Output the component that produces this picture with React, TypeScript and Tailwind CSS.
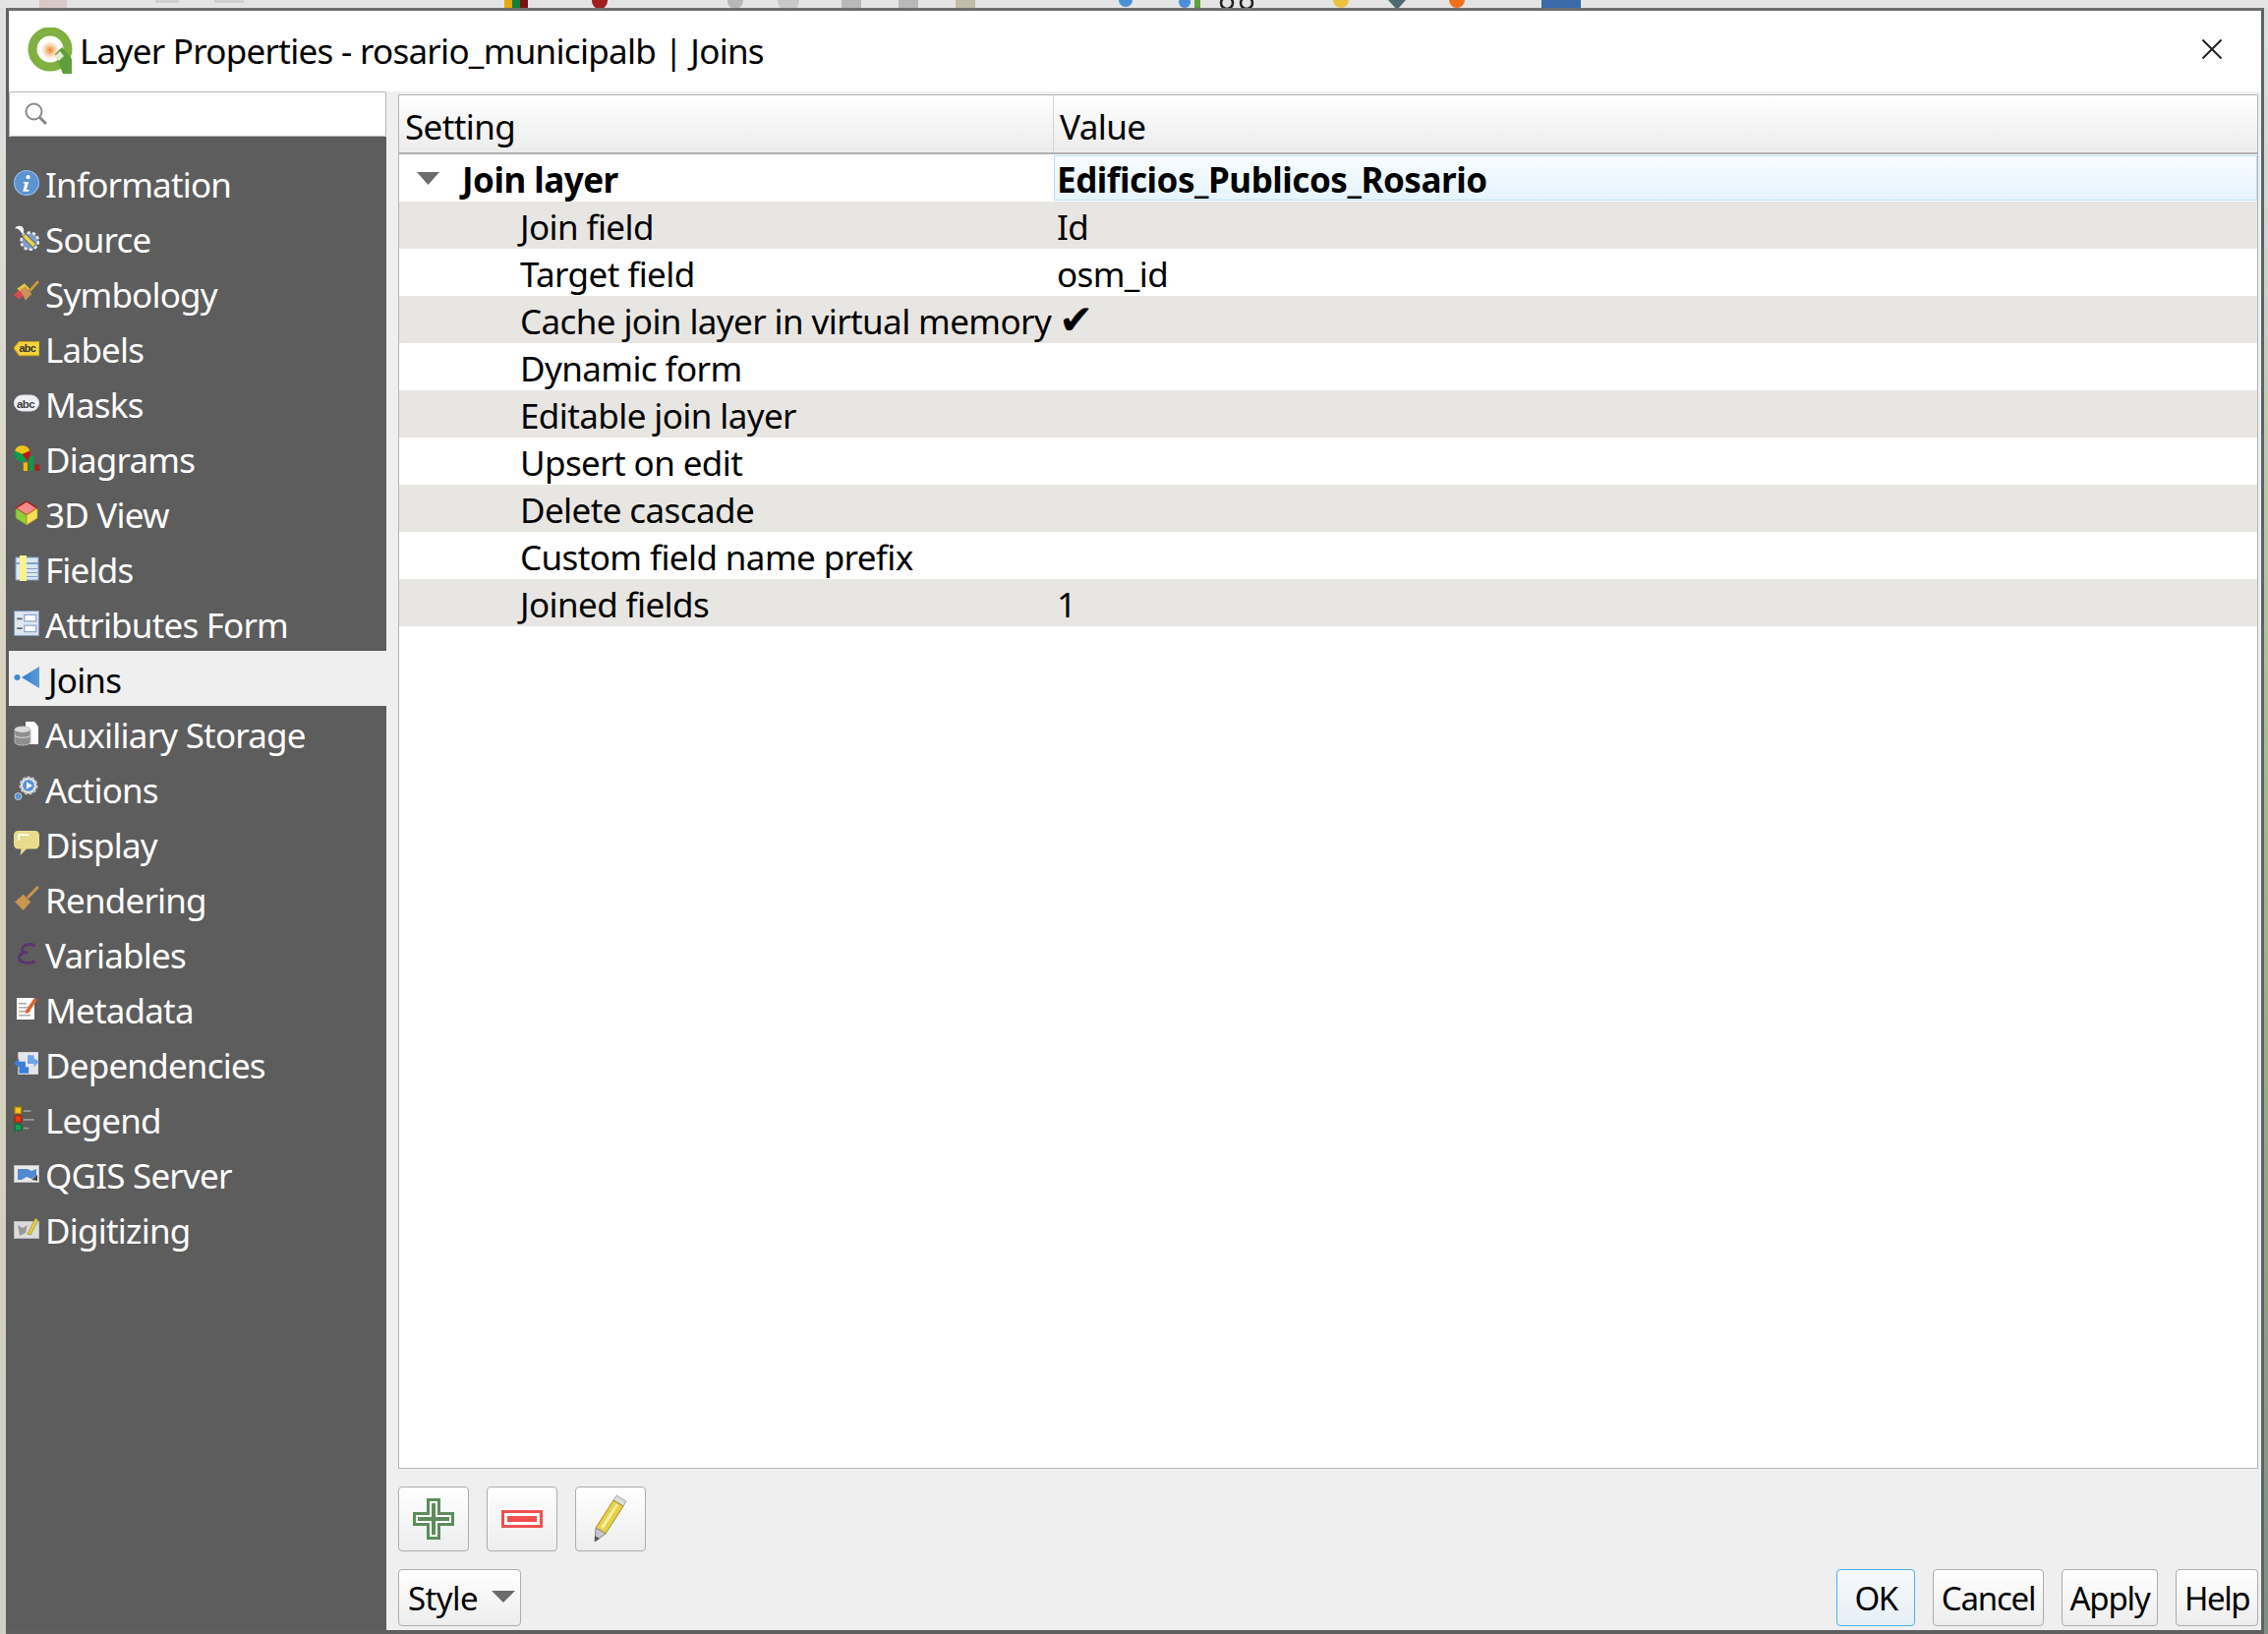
import React from "react";

const Info = () => (
  <svg viewBox="0 0 24 24" className="w-full h-full">
    <circle cx="12" cy="12" r="11.5" fill="#5b93d3" stroke="#9cc0e8" />
    <circle cx="13.5" cy="6.5" r="2" fill="#fff" />
    <path d="M9 11h5l-2 7.5h2.5l-.5 1.5H8.5l2-7.5H9z" fill="#fff" />
  </svg>
);
const Source = () => (
  <svg viewBox="0 0 24 24" className="w-full h-full">
    <circle cx="15" cy="15" r="8" fill="#7d9cc6" stroke="#e6e6e6" strokeWidth="2.5" strokeDasharray="3 2" />
    <path d="M8 11l10 10 3-3L11 8z" fill="#e8cf4d" stroke="#4a4a4a" strokeWidth=".8" />
    <path d="M1 3c2-3 7-3 8 0 1 2 0 4 0 6L7 7C6 5 4 3 1 3z" fill="#f4f4f4" />
  </svg>
);
const Symbology = () => (
  <svg viewBox="0 0 24 24" className="w-full h-full">
    <path d="M0 14l7-7 5 5-7 6z" fill="#d94a4a" />
    <path d="M3 8l7-5 5 5-5 5z" fill="#e7c93c" />
    <path d="M6 9l5-3 6 7-6 6z" fill="#c9935a" />
    <path d="M15 10l8-9" stroke="#d39b33" strokeWidth="2.4" />
  </svg>
);
const Labels = () => (
  <svg viewBox="0 0 24 24" className="w-full h-full">
    <path d="M0 12l5-6h19v13H5z" fill="#f4d13d" stroke="#c7a41b" />
    <text x="5" y="16" fontSize="10" fontWeight="700" fill="#333" fontFamily="'Liberation Sans', sans-serif">abc</text>
  </svg>
);
const Masks = () => (
  <svg viewBox="0 0 26 24" className="w-full h-full">
    <rect x="0.5" y="4" width="25" height="16" rx="8" fill="#f1f1f5" stroke="#dfe2ee" />
    <text x="3" y="16.5" fontSize="11.5" fontWeight="700" fill="#3c3c46" fontFamily="'Liberation Sans', sans-serif">abc</text>
  </svg>
);
const Diagrams = () => (
  <svg viewBox="0 0 24 24" className="w-full h-full">
    <circle cx="8" cy="8" r="7.5" fill="#0e9a46" />
    <path d="M8 8V.5A7.5 7.5 0 0 1 15.5 8c0 3-1 5-3 6z" fill="#c1131c" />
    <path d="M1 5a7.5 7.5 0 0 1 14 0L8 8z" fill="#f5c518" />
    <rect x="9" y="16" width="4" height="8" fill="#f5b800" />
    <rect x="14.5" y="10" width="4" height="14" fill="#0e9a46" />
    <rect x="20" y="18" width="4" height="6" fill="#b01a1a" />
  </svg>
);
const View3D = () => (
  <svg viewBox="0 0 24 26" className="w-full h-full">
    <path d="M12 1l11 7-11 7L1 8z" fill="#f58a8a" stroke="#b01010" strokeWidth="1.2" />
    <path d="M1 8l11 7v10L1 18z" fill="#8fd03a" stroke="#6f8f2a" strokeWidth=".8" />
    <path d="M23 8l-11 7v10l11-7z" fill="#f5e056" stroke="#b89b20" strokeWidth=".8" />
  </svg>
);
const Fields = () => (
  <svg viewBox="0 0 24 26" className="w-full h-full">
    <rect x="1" y="2" width="23" height="23" fill="#dce6f3" stroke="#7fa1cc" />
    <path d="M1 7h23v2H1zM8 13h15v1H8zM8 17h15v1H8zM8 21h15v1H8z" fill="#7fa1cc" />
    <rect x="5" y="0" width="7" height="26" fill="#f8f28a" />
  </svg>
);
const AttrForm = () => (
  <svg viewBox="0 0 24 24" className="w-full h-full">
    <rect x=".5" y=".5" width="23" height="23" fill="#dfe6f0" stroke="#7f9cc4" />
    <rect x="10" y="4" width="11" height="6" fill="#fff" stroke="#7f9cc4" />
    <rect x="10" y="14" width="11" height="6" fill="#fff" stroke="#7f9cc4" />
    <path d="M3 7h5v1.5H3zM3 16h5v1.5H3z" fill="#666" />
  </svg>
);
const JoinIcon = () => (
  <svg viewBox="0 0 28 24" className="w-full h-full">
    <defs>
      <linearGradient id="jn" x1="0" x2="1">
        <stop offset="0" stopColor="#2f7fd0" />
        <stop offset="1" stopColor="#5a9ad8" />
      </linearGradient>
    </defs>
    <circle cx="3.5" cy="11" r="3" fill="#3f88d0" />
    <path d="M8 11L26 0v22z" fill="url(#jn)" />
  </svg>
);
const Aux = () => (
  <svg viewBox="0 0 26 26" className="w-full h-full">
    <path d="M12 1h9l4 5v18H12z" fill="#fff" />
    <path d="M1 9c0-4 16-4 16 0v13c0 4-16 4-16 0z" fill="#8f8f8f" stroke="#b5b5b5" />
    <ellipse cx="9" cy="9" rx="8" ry="3" fill="#d9d9d9" />
    <path d="M1 15c2 3 14 3 16 0" fill="none" stroke="#ddd" />
  </svg>
);
const Actions = () => (
  <svg viewBox="0 0 26 26" className="w-full h-full">
    <circle cx="15" cy="10" r="8" fill="#fff" stroke="#c9c9c9" strokeWidth="3" strokeDasharray="3 1.5" />
    <circle cx="15" cy="10" r="6" fill="#5b93d3" />
    <path d="M13 6.5l6 3.5-6 3.5z" fill="#fff" />
    <circle cx="4.5" cy="21" r="3.5" fill="#5b93d3" stroke="#ccc" />
  </svg>
);
const Display = () => (
  <svg viewBox="0 0 24 24" className="w-full h-full">
    <path d="M4 0h16a4 4 0 0 1 4 4v9a4 4 0 0 1-4 4H12l-6 6 1-6H4a4 4 0 0 1-4-4V4a4 4 0 0 1 4-4z" fill="#e8dc8c" />
    <path d="M4 3h10v1.5H5.5V9H4z" fill="#fff" />
  </svg>
);
const Rendering = () => (
  <svg viewBox="0 0 24 24" className="w-full h-full">
    <path d="M1 15l8-7 7 7-7 8z" fill="#c9964f" />
    <path d="M13 11L23 1" stroke="#c9964f" strokeWidth="2.6" />
  </svg>
);
const Variables = () => (
  <svg viewBox="0 0 24 24" className="w-full h-full">
    <path d="M20 5c-3-3-12-2-12 3 0 2 2 3 5 3-4 0-8 1-8 5 0 5 11 6 15 3" fill="none" stroke="#5b3470" strokeWidth="2.6" />
  </svg>
);
const Metadata = () => (
  <svg viewBox="0 0 24 26" className="w-full h-full">
    <rect x="2" y="2" width="18" height="22" fill="#fff" />
    <path d="M4 7h8v1.5H4zM4 11h12v1.5H4zM4 15h12v1.5H4zM4 19h12v1.5H4z" fill="#aaa" />
    <path d="M11 15L20 2l3 2-9 13-3 1z" fill="#e2622b" />
  </svg>
);
const Dependencies = () => (
  <svg viewBox="0 0 24 24" className="w-full h-full">
    <rect x="4" y="1" width="19" height="21" fill="#e6e6ea" />
    <path d="M0 12l5-5v3h6v5h3v6H5v-6z" fill="#3d7fd6" />
    <path d="M24 10l-5 5v-3h-6V4h6v3z" fill="#6fa3e4" />
  </svg>
);
const Legend = () => (
  <svg viewBox="0 0 24 24" className="w-full h-full">
    <rect x="1" y="1" width="6" height="6" fill="#f5c518" stroke="#b0800a" />
    <rect x="1" y="9" width="6" height="6" fill="#e8400f" stroke="#a02000" />
    <rect x="1" y="17" width="6" height="6" fill="#12a050" stroke="#0a6a30" />
    <path d="M9 4h7v1.5H9zM9 12h10v1.5H9zM9 20h5v1.5H9z" fill="#9a9a9a" />
  </svg>
);
const Server = () => (
  <svg viewBox="0 0 26 20" className="w-full h-full">
    <rect x=".5" y="1.5" width="25" height="17" fill="#e9e9e9" stroke="#bbb" />
    <path d="M4 5h10l4 2 5-2v7l-5 3-5-2-5 3H4z" fill="#4f8ad0" />
    <path d="M18 16l6-5v6z" fill="#444" />
  </svg>
);
const Digitizing = () => (
  <svg viewBox="0 0 26 24" className="w-full h-full">
    <rect x=".5" y="4.5" width="25" height="17" fill="#dcdcdc" stroke="#bbb" />
    <path d="M4 8l5 3 5-3-2 8-6 3z" fill="#9a9a9a" />
    <path d="M14 17l8-16 3 2-8 15z" fill="#e8cf3d" stroke="#8a7a20" strokeWidth=".6" />
  </svg>
);

const QgisLogo = () => (
  <svg viewBox="0 0 48 48" className="w-12 h-12 shrink-0">
    <defs>
      <radialGradient id="qc">
        <stop offset="0" stopColor="#f2852a" />
        <stop offset=".55" stopColor="#f9cfa8" />
        <stop offset="1" stopColor="#fff" />
      </radialGradient>
    </defs>
    <circle cx="24" cy="22" r="18" fill="none" stroke="#7fb040" strokeWidth="9" />
    <circle cx="24" cy="23" r="9" fill="url(#qc)" />
    <path d="M29 27l7-7 10 12v15h-9z" fill="#5f9e3a" />
    <path d="M28 30l6-6 4 5-5 5z" fill="#dfeccf" />
  </svg>
);

const navItems = [
  { label: "Information", Icon: Info },
  { label: "Source", Icon: Source },
  { label: "Symbology", Icon: Symbology },
  { label: "Labels", Icon: Labels },
  { label: "Masks", Icon: Masks },
  { label: "Diagrams", Icon: Diagrams },
  { label: "3D View", Icon: View3D },
  { label: "Fields", Icon: Fields },
  { label: "Attributes Form", Icon: AttrForm },
  { label: "Joins", Icon: JoinIcon, active: true },
  { label: "Auxiliary Storage", Icon: Aux },
  { label: "Actions", Icon: Actions },
  { label: "Display", Icon: Display },
  { label: "Rendering", Icon: Rendering },
  { label: "Variables", Icon: Variables },
  { label: "Metadata", Icon: Metadata },
  { label: "Dependencies", Icon: Dependencies },
  { label: "Legend", Icon: Legend },
  { label: "QGIS Server", Icon: Server },
  { label: "Digitizing", Icon: Digitizing },
];

const rows = [
  { k: "Join field", v: "Id" },
  { k: "Target field", v: "osm_id" },
  { k: "Cache join layer in virtual memory", v: "✔" },
  { k: "Dynamic form", v: "" },
  { k: "Editable join layer", v: "" },
  { k: "Upsert on edit", v: "" },
  { k: "Delete cascade", v: "" },
  { k: "Custom field name prefix", v: "" },
  { k: "Joined fields", v: "1" },
];

const btn =
  "border border-[#adadad] rounded-[4px] bg-linear-to-b from-white to-[#ededed] flex items-center justify-center";

export default function App() {
  return (
    <div className="w-[2307px] h-[1662px] flex flex-col overflow-hidden bg-[#e4e4e4] font-['Noto_Sans',sans-serif] text-[35px] tracking-[-0.6px] text-black">
      {/* toolbar of the main window, cut off behind the dialog */}
      <svg width="2307" height="8" className="block shrink-0">
        <rect x="40" width="28" height="8" fill="#d8c8c8" />
        <rect x="158" width="24" height="3" fill="#cfcfcf" />
        <rect x="218" width="30" height="3" fill="#cfcfcf" />
        <rect x="513" width="8" height="8" fill="#e8a90c" />
        <rect x="521" width="8" height="8" fill="#12803a" />
        <rect x="529" width="8" height="8" fill="#7a1010" />
        <circle cx="610" cy="1" r="8" fill="#a02020" />
        <circle cx="748" cy="1" r="8" fill="#b8b8b8" />
        <circle cx="802" cy="1" r="11" fill="#c8c8c8" />
        <rect x="856" width="20" height="8" fill="#b8b8b8" />
        <rect x="914" width="20" height="8" fill="#b8b8b8" />
        <rect x="972" width="20" height="8" fill="#c0bca8" />
        <circle cx="1145" cy="0" r="7" fill="#4a90d9" />
        <circle cx="1205" cy="2" r="6" fill="#4a90d9" />
        <rect x="1215" width="6" height="8" fill="#5fa040" />
        <circle cx="1248" cy="3" r="6" fill="none" stroke="#222" strokeWidth="2.5" />
        <circle cx="1268" cy="3" r="6" fill="none" stroke="#222" strokeWidth="2.5" />
        <circle cx="1364" cy="0" r="8" fill="#eec040" />
        <path d="M1412 0h18l-9 10z" fill="#4d6a70" />
        <circle cx="1482" cy="0" r="8" fill="#f0701a" />
        <rect x="1568" width="40" height="8" fill="#3a6aa8" />
      </svg>

      <div className="flex flex-1 min-h-0">
        <div className="w-[6px] shrink-0 bg-linear-to-b from-[#e0e0e0] via-[#d6d0b8] to-[#cfcfc8]" />

        <div className="w-[2297px] shrink-0 flex flex-col border-t-[3px] border-l-[3px] border-r-[3px] border-b-[4px] border-t-[#6e6e6e] border-l-[#5f5f5f] border-r-[#5a6468] border-b-[#5f5f5f] bg-[#efefef]">
          {/* title bar */}
          <div className="h-[82px] shrink-0 bg-white flex items-center pl-[18px] pr-[40px]">
            <QgisLogo />
            <span className="ml-[6px] flex-1 tracking-[-0.72px]">
              Layer Properties - rosario_municipalb | Joins
            </span>
            <svg width="20" height="20" viewBox="0 0 20 20" className="mb-[4px]">
              <path d="M0.5 0.5L19.5 19.5M19.5 0.5L0.5 19.5" stroke="#222" strokeWidth="2" />
            </svg>
          </div>

          <div className="flex flex-1 min-h-0">
            {/* side nav */}
            <div className="w-[384px] shrink-0 flex flex-col">
              <div className="h-[46px] shrink-0 bg-white border border-[#b8b8b8] rounded-[2px] flex items-center pl-[14px]">
                <svg width="26" height="26" viewBox="0 0 26 26">
                  <circle cx="10.5" cy="10.5" r="8" fill="none" stroke="#888" strokeWidth="2" />
                  <path d="M16 16l7 7" stroke="#888" strokeWidth="3" />
                </svg>
              </div>
              <div className="flex-1 bg-[#5d5d5d] ml-[-3px] pt-[19px] flex flex-col">
                {navItems.map(({ label, Icon, active }) => (
                  <div
                    key={label}
                    className={
                      active
                        ? "h-[56px] shrink-0 flex items-center ml-[3px] bg-[#efefef] text-black pl-[5px]"
                        : "h-[56px] shrink-0 flex items-center text-white pl-[8px]"
                    }
                  >
                    <span className={active ? "w-[28px] h-[26px] shrink-0 block" : "w-[26px] h-[26px] shrink-0 block"}>
                      <Icon />
                    </span>
                    <span
                      className={
                        active
                          ? "ml-[7px] pt-[5px] tracking-[-0.8px]"
                          : "ml-[6px] pt-[5px] tracking-[-0.8px]"
                      }
                    >
                      {label}
                    </span>
                  </div>
                ))}
              </div>
            </div>

            {/* joins panel */}
            <div className="flex-1 min-w-0 flex flex-col pl-[12px] pr-[3px] pt-[3px]">
              <div className="flex-1 min-h-0 bg-white border border-[#b4b4b4] flex flex-col">
                <div className="h-[60px] shrink-0 flex border-b-2 border-[#b0b0b0] bg-linear-to-b from-white to-[#ececec]">
                  <div className="w-[666px] shrink-0 border-r border-[#d4d4d4] pl-[6px] pt-[6px] flex items-center">Setting</div>
                  <div className="flex-1 pl-[6px] pt-[6px] flex items-center">Value</div>
                </div>
                <div className="h-[48px] shrink-0 flex font-bold items-center">
                  <div className="w-[666px] shrink-0 flex items-center pl-[18px]">
                    <svg width="23" height="13" viewBox="0 0 23 13" className="shrink-0">
                      <path d="M0 0h23L11.5 13z" fill="#6b6b6b" />
                    </svg>
                    <span className="ml-[23px] pt-[5px] tracking-[-0.5px]">Join layer</span>
                  </div>
                  <div className="flex-1 h-[46px] border border-[#b6dff6] bg-linear-to-b from-[#f8fcff] to-[#e6f4fe] pl-[2px] pt-[5px] flex items-center tracking-[-0.45px]">
                    Edificios_Publicos_Rosario
                  </div>
                </div>
                {rows.map((r, i) => (
                  <div
                    key={r.k}
                    className={
                      i % 2 === 0
                        ? "h-[48px] shrink-0 flex items-center bg-[#e8e6e2]"
                        : "h-[48px] shrink-0 flex items-center bg-white"
                    }
                  >
                    <div className="w-[666px] shrink-0 pl-[123px] pt-[4px] whitespace-nowrap">{r.k}</div>
                    <div
                      className={
                        r.v === "✔"
                          ? "flex-1 pl-[5px] pt-[2px] text-[42px] leading-none font-['DejaVu_Sans',sans-serif]"
                          : "flex-1 pl-[3px] pt-[4px]"
                      }
                    >
                      {r.v}
                    </div>
                  </div>
                ))}
              </div>

              {/* join buttons */}
              <div className="flex gap-[18px] mt-[18px] shrink-0">
                <div className={btn + " w-[72px] h-[66px]"}>
                  <svg width="42" height="42" viewBox="0 0 42 42">
                    <path d="M14 0h14v14h14v14H28v14H14V28H0V14h14z" fill="#5c8c5a" />
                    <path d="M17 3h8v14h14v8H25v14h-8V25H3v-8h14z" fill="#fff" />
                    <path d="M19 5h4v14h14v4H23v14h-4V23H5v-4h14z" fill="#5c8c5a" />
                  </svg>
                </div>
                <div className={btn + " w-[72px] h-[66px]"}>
                  <svg width="42" height="18" viewBox="0 0 42 18">
                    <rect width="42" height="18" fill="#f05050" />
                    <rect x="3" y="3" width="36" height="12" fill="#fff" />
                    <rect x="6" y="6" width="30" height="6" fill="#f05050" />
                  </svg>
                </div>
                <div className={btn + " w-[72px] h-[66px]"}>
                  <svg width="34" height="50" viewBox="0 0 34 50">
                    <path d="M23 1l10 6-3 5-10-6z" fill="#dcdcdc" stroke="#aaa" />
                    <path d="M20 6l10 6-18 28-10-6z" fill="#e4d04a" stroke="#a88f1a" />
                    <path d="M23 9l2 2L10 35l-3-2z" fill="#f6ec9a" />
                    <path d="M2 34l10 6-11 8z" fill="#c8c8c8" stroke="#888" />
                    <path d="M1 42v6l5-3z" fill="#555" />
                  </svg>
                </div>
              </div>

              {/* dialog buttons */}
              <div className="flex mt-[18px] h-[58px] shrink-0 mb-[4px] gap-[18px] text-[33px]">
                <div className={btn + " w-[125px] justify-start pl-[9px] pt-[1px]"}>
                  <span>Style</span>
                  <svg width="24" height="12" viewBox="0 0 24 12" className="ml-[14px] mb-[4px]">
                    <path d="M0 0h24L12 12z" fill="#6b6b6b" />
                  </svg>
                </div>
                <div className="flex-1" />
                <div className="w-[80px] border border-[#4eaef0] rounded-[4px] bg-linear-to-b from-[#f6f9fc] to-[#e6eef5] flex items-center justify-center tracking-[-1.5px] pt-[1px]">OK</div>
                <div className={btn + " w-[113px] tracking-[-1.2px] pt-[1px]"}>Cancel</div>
                <div className={btn + " w-[98px] tracking-[-1.2px] pt-[1px]"}>Apply</div>
                <div className={btn + " w-[84px] tracking-[-1.5px] pt-[1px]"}>Help</div>
              </div>
            </div>
          </div>
        </div>

        <div className="w-[4px] shrink-0 bg-linear-to-b from-[#e0e0e0] via-[#a8b890] to-[#7f8f80]" />
      </div>
    </div>
  );
}
